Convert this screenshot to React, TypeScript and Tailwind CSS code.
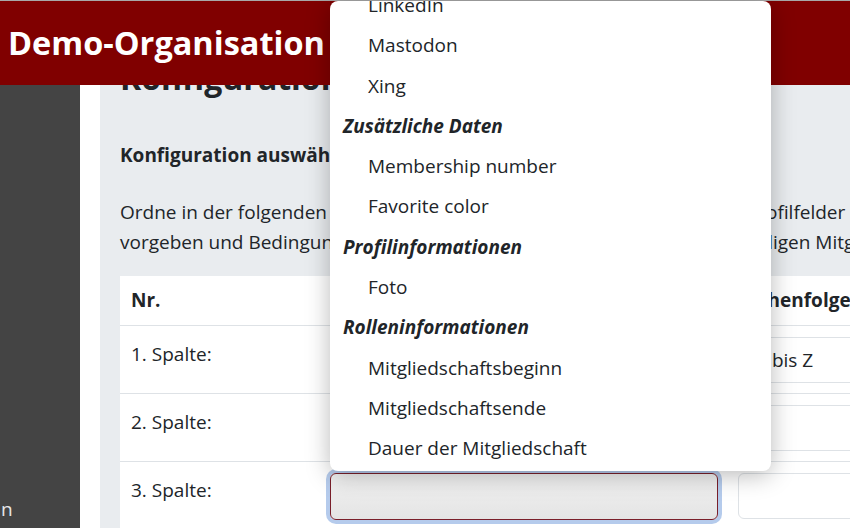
import React from "react";

type Entry = { label: string; group?: boolean };

const entries: Entry[] = [
  { label: "LinkedIn" },
  { label: "Mastodon" },
  { label: "Xing" },
  { label: "Zusätzliche Daten", group: true },
  { label: "Membership number" },
  { label: "Favorite color" },
  { label: "Profilinformationen", group: true },
  { label: "Foto" },
  { label: "Rolleninformationen", group: true },
  { label: "Mitgliedschaftsbeginn" },
  { label: "Mitgliedschaftsende" },
  { label: "Dauer der Mitgliedschaft" },
];

const rows = [
  { nr: "1. Spalte:", order: "A bis Z" },
  { nr: "2. Spalte:", order: "" },
  { nr: "3. Spalte:", order: "", focused: true },
];

const DropdownList: React.FC = () => (
  <div className="absolute left-[330px] top-[1px] z-20 w-[441px] h-[470px] overflow-hidden rounded-lg bg-white shadow-[0_4px_24px_rgba(0,0,0,0.28)]">
    <ul className="mt-[-16px]">
      {entries.map((e) => (
        <li
          key={e.label}
          className={
            e.group
              ? "h-[40.3px] leading-[40.3px] pl-[13px] font-bold italic text-[#212529]"
              : "h-[40.3px] leading-[40.3px] pl-[38px] text-[#212529]"
          }
        >
          {e.label}
        </li>
      ))}
    </ul>
  </div>
);

export default function App() {
  return (
    <div className="relative h-[528px] w-[850px] overflow-hidden bg-white text-[19px] text-[#212529] font-['Open_Sans',sans-serif]">
      <header className="absolute left-0 top-0 z-10 flex h-[85px] w-full items-center border-t border-[#a8a8a8] bg-[#800000] pl-[8px]">
        <span className="text-[32.5px] font-bold text-white">Demo-Organisation</span>
      </header>

      <DropdownList />

      <div className="flex h-full">
        <aside className="flex w-[80px] shrink-0 flex-col justify-end bg-[#444444] pb-[4px] text-[#e8e8e8]">
          <span className="pl-[1px] leading-[30px]">n</span>
        </aside>
        <div className="w-[20px] shrink-0 bg-white" />
        <main className="min-w-0 flex-1 overflow-hidden bg-[#e9ecef] pl-[20px]">
          <h1 className="mt-[58px] whitespace-nowrap text-[32px] font-bold leading-[40px]">Konfiguration</h1>
          <h2 className="mt-[42px] whitespace-nowrap font-bold leading-[30px]">Konfiguration auswählen</h2>
          <div className="mt-[27px] leading-[30px]">
            <div className="whitespace-nowrap">
              Ordne in der folgenden Tabelle den Spalten der Liste die gewünschten Profilfelder zu. Zusätzlich
            </div>
            <div className="whitespace-nowrap">
              vorgeben und Bedingungen angeben, um nur die gewünschten und jeweiligen Mitglieder anzuzeigen.
            </div>
          </div>
          <div className="mt-[19px] w-[800px] bg-white">
            <div className="flex h-[50px] items-center border-b border-[#dee2e6] font-bold">
              <div className="w-[200px] pl-[11px]">Nr.</div>
              <div className="w-[408px] pl-[10px]">Profilfeld</div>
              <div className="pl-[10px] whitespace-nowrap">Reihenfolge</div>
            </div>
            {rows.map((r) => (
              <div key={r.nr} className="flex h-[68px] border-b border-[#dee2e6]">
                <div className="w-[200px] pl-[11px] pt-[15px] leading-[27px]">{r.nr}</div>
                <div className="w-[408px] px-[10px] pt-[11px]">
                  <div
                    className={
                      r.focused
                        ? "h-[47px] rounded-md border border-[#7a1f2a] bg-gradient-to-b from-[#f2f2f2] to-[#e4e4e4] shadow-[0_0_0_4px_rgba(120,160,220,0.55)]"
                        : "h-[46px] rounded-md border border-[#dee2e6] bg-white"
                    }
                  />
                </div>
                <div className="w-[192px] pl-[10px] pt-[11px]">
                  <div className="h-[46px] w-[200px] rounded-md border border-[#dee2e6] bg-white pl-[16px] leading-[44px]">
                    {r.order}
                  </div>
                </div>
              </div>
            ))}
          </div>
        </main>
      </div>
    </div>
  );
}
